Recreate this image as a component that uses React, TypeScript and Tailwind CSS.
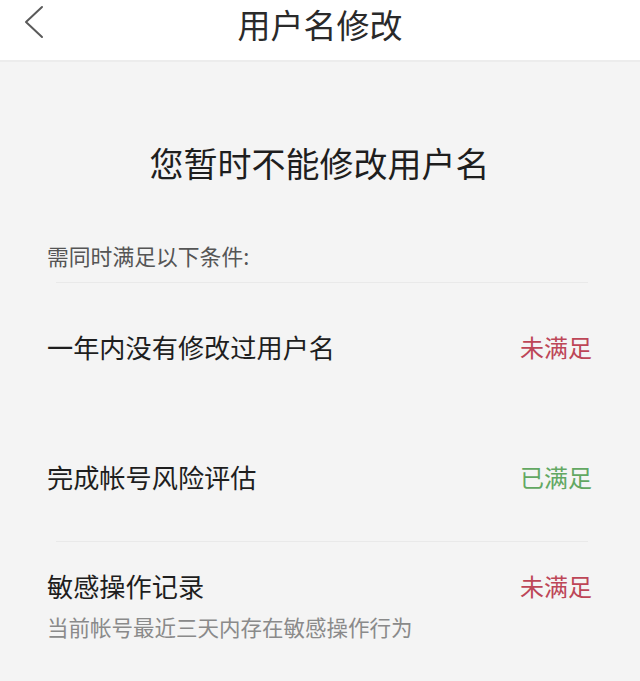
import React from 'react';

const font = { fontFamily: '"Noto Sans CJK SC", "Noto Sans", sans-serif' };

type Row = { label: string; ok: boolean; note?: string };

const rows: Row[] = [
    { label: '一年内没有修改过用户名', ok: false },
    { label: '完成帐号风险评估', ok: true },
    { label: '敏感操作记录', ok: false, note: '当前帐号最近三天内存在敏感操作行为' },
];

const Status = ({ ok }: { ok: boolean }) => (
    <span className={`text-[24px] leading-[36px] ${ok ? 'text-[#62a862]' : 'text-[#bd4657]'}`}>
        {ok ? '已满足' : '未满足'}
    </span>
);

const App = () => {
    return (
        <div className="w-[640px] h-[681px] bg-[#f4f4f4] overflow-hidden" style={font}>
            {/* header */}
            <div className="relative h-[62px] bg-white border-b-2 border-[#ececec]">
                <button className="absolute left-[22px] top-[4px] w-[24px] h-[36px] flex items-center justify-center">
                    <svg width="22" height="34" viewBox="0 0 22 34" fill="none">
                        <path d="M19 2 L3 17 L19 32" stroke="#5a5a5a" strokeWidth="2" strokeLinecap="round" strokeLinejoin="round" />
                    </svg>
                </button>
                <h1 className="text-center text-[33px] leading-[48px] text-[#2a2a2a] font-normal">用户名修改</h1>
            </div>

            <div className="pl-[47px] pr-[48px]">
                <h2 className="mt-[77px] text-center text-[34px] leading-[48px] text-[#1e1e1e] font-normal">
                    您暂时不能修改用户名
                </h2>

                <p className="mt-[54px] text-[21.8px] leading-[30px] text-[#555]">需同时满足以下条件:</p>
                <div className="mt-[11px] ml-[9px] mr-[4px] h-px bg-[#e9e9e9]" />

                {/* first two rows */}
                <div className="mt-[46px] flex items-center justify-between">
                    <span className="text-[26.2px] leading-[36px] text-[#1e1e1e]">{rows[0].label}</span>
                    <Status ok={rows[0].ok} />
                </div>
                <div className="mt-[94px] flex items-center justify-between">
                    <span className="text-[26.2px] leading-[36px] text-[#1e1e1e]">{rows[1].label}</span>
                    <Status ok={rows[1].ok} />
                </div>

                <div className="mt-[46px] ml-[9px] mr-[4px] h-px bg-[#e9e9e9]" />

                <div className="mt-[26px] flex items-center justify-between">
                    <span className="text-[26.2px] leading-[36px] text-[#1e1e1e]">{rows[2].label}</span>
                    <Status ok={rows[2].ok} />
                </div>
                <p className="mt-[8px] text-[21.5px] leading-[30px] text-[#8a8a8a]">{rows[2].note}</p>
            </div>
        </div>
    );
};

export default App;
